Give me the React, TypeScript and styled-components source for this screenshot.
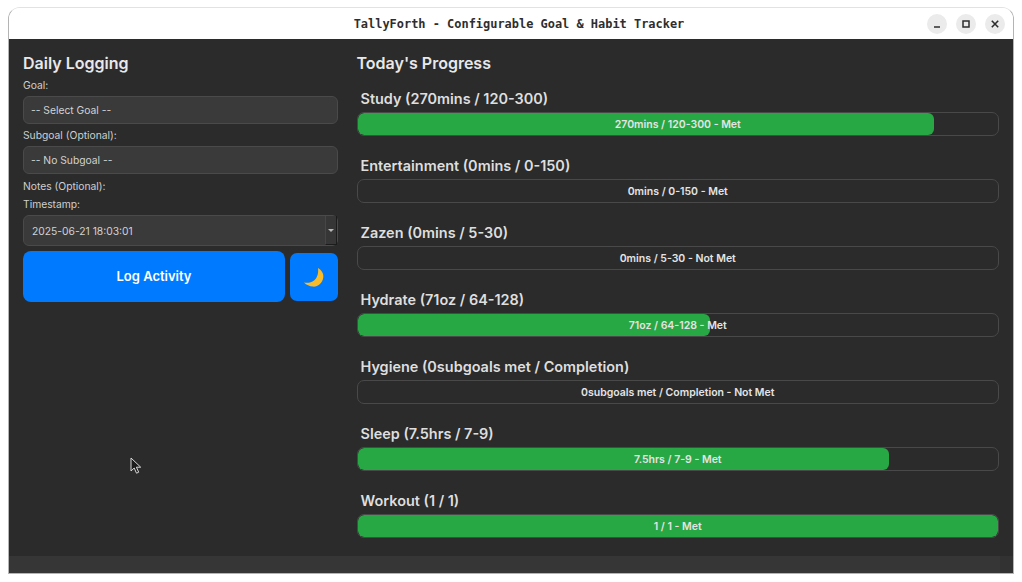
import React, { FC } from 'react';
import styled, { createGlobalStyle } from 'styled-components';

const GlobalStyle = createGlobalStyle`
  html, body {
    margin: 0;
    padding: 0;
    background: #ffffff;
  }
  * {
    box-sizing: border-box;
  }
`;

const Page = styled.div`
  width: 1022px;
  height: 582px;
  padding: 7px 8px 8px 8px;
  background: #ffffff;
  overflow: hidden;
  font-family: Inter, "Noto Sans", sans-serif;
`;

const Window = styled.div`
  position: relative;
  width: 1006px;
  height: 567px;
  display: flex;
  flex-direction: column;
  border: 1px solid #b4b4b4;
  border-top-color: #e2e2e2;
  border-radius: 12px 12px 0 0;
  overflow: hidden;
`;

const TitleBar = styled.header`
  position: relative;
  height: 31px;
  flex: none;
  display: flex;
  align-items: center;
  justify-content: center;
  padding-left: 16px;
  background: #ffffff;
`;

const TitleText = styled.div`
  font-family: "DejaVu Sans Mono", "Liberation Mono", monospace;
  font-size: 11.95px;
  font-weight: 700;
  color: #2e2e2e;
`;

const Controls = styled.div`
  position: absolute;
  right: 8px;
  top: 6px;
  display: flex;
  gap: 9px;
`;

const ControlButton = styled.div`
  width: 20px;
  height: 20px;
  border-radius: 50%;
  background: #ebebeb;
  display: flex;
  align-items: center;
  justify-content: center;
`;

const Body = styled.main`
  flex: 1;
  display: flex;
  gap: 18.5px;
  padding: 14px 14px 0 14px;
  background: #2b2b2b;
  color: #e0e0e0;
`;

const LeftPanel = styled.section`
  width: 315px;
  flex: none;
  display: flex;
  flex-direction: column;
`;

const RightPanel = styled.section`
  width: 642.5px;
  flex: none;
  display: flex;
  flex-direction: column;
`;

const Heading = styled.h2`
  margin: 0;
  height: 20px;
  line-height: 20px;
  font-size: 16px;
  font-weight: 600;
  color: #e8e8e8;
`;

const FieldLabel = styled.label<{ $top?: number }>`
  display: block;
  height: 14px;
  line-height: 14px;
  margin-top: ${(p) => p.$top ?? 4}px;
  font-size: 10.3px;
  color: #cfcfcf;
`;

const SelectBox = styled.div`
  height: 28.5px;
  margin-top: 3.5px;
  padding: 0 7px;
  display: flex;
  align-items: center;
  background: #3a3a3a;
  border: 1px solid #4a4a4a;
  border-radius: 6px;
  font-size: 10.3px;
  color: #d2d2d2;
`;

const TimestampBox = styled(SelectBox)`
  position: relative;
  height: 31px;
  margin-top: 4px;
  padding: 0 8px;
`;

const Spinner = styled.div`
  position: absolute;
  right: 0;
  top: 0;
  bottom: 0;
  width: 12px;
  background: #363636;
  border-left: 1px solid #464646;
  border-right: 1px solid #1c1c1c;
  border-bottom: 1px solid #1c1c1c;
  display: flex;
  align-items: center;
  justify-content: center;

  &::after {
    content: '';
    border-left: 3px solid transparent;
    border-right: 3px solid transparent;
    border-top: 3px solid #b8b8b8;
  }
`;

const ActionRow = styled.div`
  margin-top: 5px;
  display: flex;
  align-items: center;
  gap: 5px;
`;

const LogButton = styled.button`
  flex: 1;
  height: 51px;
  padding: 0 0 2px 0;
  border: none;
  border-radius: 8px;
  background: #007bff;
  color: #ffffff;
  font-family: inherit;
  font-size: 13px;
  font-weight: 600;
`;

const ThemeButton = styled.button`
  width: 48px;
  height: 48px;
  padding: 0;
  border: none;
  border-radius: 7px;
  background: #007bff;
  display: flex;
  align-items: center;
  justify-content: center;
`;

const GoalList = styled.div`
  margin-top: 5px;
  display: flex;
  flex-direction: column;
  gap: 9px;
`;

const GoalRow = styled.div`
  display: flex;
  flex-direction: column;
`;

const GoalTitle = styled.div`
  height: 34px;
  padding: 10.5px 4px 0 4px;
  line-height: 20px;
  font-size: 14.45px;
  font-weight: 600;
  color: #dedede;
`;

const Track = styled.div`
  position: relative;
  height: 24px;
  border: 1px solid #494949;
  border-radius: 7px;
  background: #2b2b2b;
  overflow: hidden;
`;

const Fill = styled.div`
  height: 100%;
  border-radius: 6px;
  background: #28a745;
`;

const TrackText = styled.div`
  position: absolute;
  inset: 0;
  display: flex;
  align-items: center;
  justify-content: center;
  font-size: 10.5px;
  font-weight: 600;
  color: #e4e4e4;
`;

const StatusStrip = styled.div`
  flex: none;
  height: 17px;
  display: flex;
  justify-content: flex-end;
  background: #363636;
`;

const StripCorner = styled.div`
  width: 13px;
  background: #323232;
`;

const Cursor = styled.svg`
  position: absolute;
  left: 121px;
  top: 449px;
`;

const goals = [
  { name: 'Study (270mins / 120-300)', text: '270mins / 120-300 - Met', pct: 90 },
  { name: 'Entertainment (0mins / 0-150)', text: '0mins / 0-150 - Met', pct: 0 },
  { name: 'Zazen (0mins / 5-30)', text: '0mins / 5-30 - Not Met', pct: 0 },
  { name: 'Hydrate (71oz / 64-128)', text: '71oz / 64-128 - Met', pct: 55 },
  { name: 'Hygiene (0subgoals met / Completion)', text: '0subgoals met / Completion - Not Met', pct: 0 },
  { name: 'Sleep (7.5hrs / 7-9)', text: '7.5hrs / 7-9 - Met', pct: 83 },
  { name: 'Workout (1 / 1)', text: '1 / 1 - Met', pct: 100 },
];

const App: FC = () => {
  return (
    <Page>
      <GlobalStyle />
      <Window>
        <TitleBar>
          <TitleText>TallyForth - Configurable Goal &amp; Habit Tracker</TitleText>
          <Controls>
            <ControlButton>
              <svg width="10" height="10" viewBox="0 0 10 10">
                <path d="M2 8h6" stroke="#2e2e2e" strokeWidth="1.5" />
              </svg>
            </ControlButton>
            <ControlButton>
              <svg width="10" height="10" viewBox="0 0 10 10">
                <rect x="2" y="2" width="6" height="6" fill="none" stroke="#2e2e2e" strokeWidth="1.5" />
              </svg>
            </ControlButton>
            <ControlButton>
              <svg width="10" height="10" viewBox="0 0 10 10">
                <path d="M1.8 1.8l6.4 6.4M8.2 1.8L1.8 8.2" stroke="#2e2e2e" strokeWidth="1.6" />
              </svg>
            </ControlButton>
          </Controls>
        </TitleBar>
        <Body>
          <LeftPanel>
            <Heading>Daily Logging</Heading>
            <FieldLabel $top={5}>Goal:</FieldLabel>
            <SelectBox>-- Select Goal --</SelectBox>
            <FieldLabel>Subgoal (Optional):</FieldLabel>
            <SelectBox>-- No Subgoal --</SelectBox>
            <FieldLabel $top={5}>Notes (Optional):</FieldLabel>
            <FieldLabel>Timestamp:</FieldLabel>
            <TimestampBox>
              2025-06-21 18:03:01
              <Spinner />
            </TimestampBox>
            <ActionRow>
              <LogButton>Log Activity</LogButton>
              <ThemeButton>
                <svg width="24" height="24" viewBox="0 0 24 24">
                  <path
                    d="M16 3C20 5.500 22 9 21.200 13C20.200 18.500 15.500 22 11 21.600C7.500 21.300 4.500 20 2 17.500C5 18 8 18 10.500 16.500C15 14 16.800 9 16 3z"
                    fill="#f8bc2b"
                  />
                </svg>
              </ThemeButton>
            </ActionRow>
          </LeftPanel>
          <RightPanel>
            <Heading>Today&apos;s Progress</Heading>
            <GoalList>
              {goals.map((g) => (
                <GoalRow key={g.name}>
                  <GoalTitle>{g.name}</GoalTitle>
                  <Track>
                    <Fill style={{ width: `${g.pct}%` }} />
                    <TrackText>{g.text}</TrackText>
                  </Track>
                </GoalRow>
              ))}
            </GoalList>
          </RightPanel>
        </Body>
        <StatusStrip>
          <StripCorner />
        </StatusStrip>
        <Cursor width="12" height="18" viewBox="0 0 12 18">
          <path d="M1 1v13l3.200-3 2.300 5.200 2.200-1-2.300-5h4.300z" fill="#1c1c1c" stroke="#d8d8d8" strokeWidth="1" />
        </Cursor>
      </Window>
    </Page>
  );
};

export default App;
